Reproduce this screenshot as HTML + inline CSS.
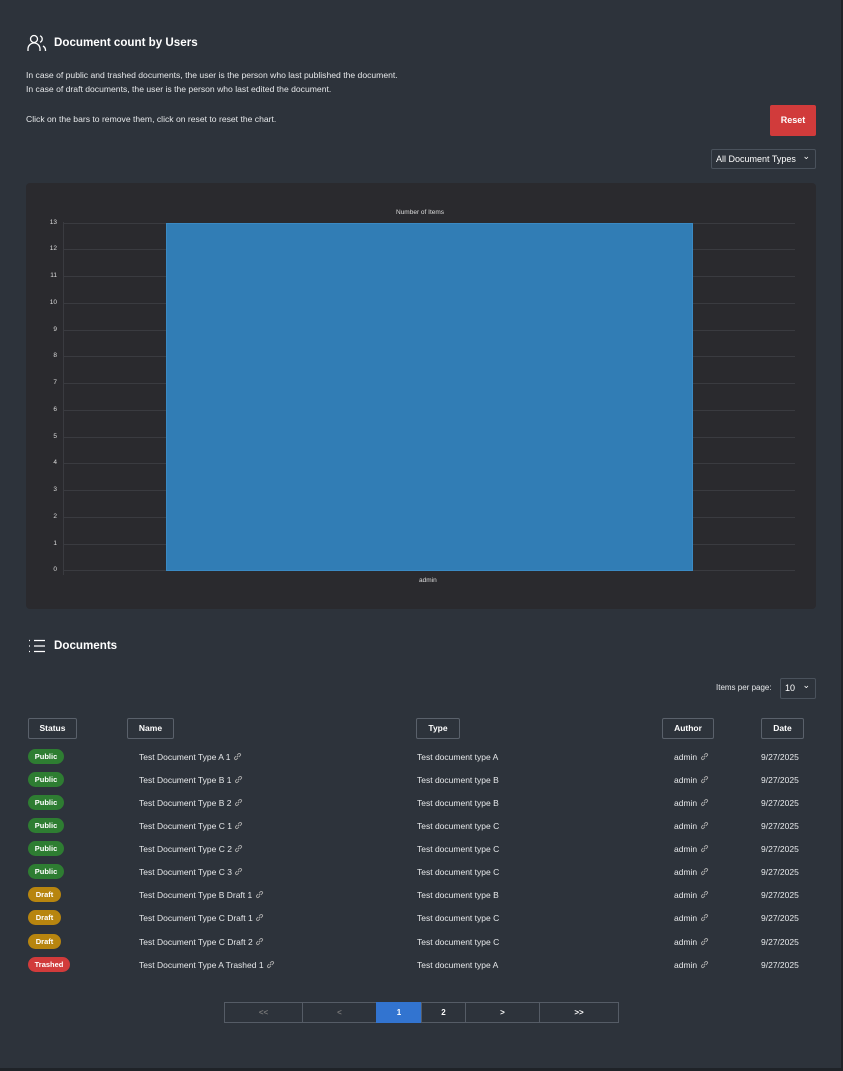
<!DOCTYPE html>
<html><head><meta charset="utf-8"><style>
*{box-sizing:border-box;margin:0;padding:0}
body{width:843px;height:1071px;background:#2d333b;font-family:"Liberation Sans",sans-serif;color:#e6e8ea;position:relative;overflow:hidden}
.a{position:absolute;white-space:nowrap}
.edge{position:absolute;right:0;top:0;width:2px;height:1071px;background:#1f2328}
.bot{position:absolute;left:0;bottom:0;width:843px;height:3px;background:#1f2328}
.h{font-size:11.6px;font-weight:bold;color:#fff}
.p{font-size:8.6px;color:#e6e8ea}
.btn{background:#d13b3b;color:#fff;font-size:9px;font-weight:bold;text-align:center;line-height:31px;border-radius:2px}
.sel{border:1px solid #4a525c;border-radius:2px;font-size:9px;color:#fff;line-height:18px;padding-left:4px}
.sel:after{content:"⌄";position:absolute;right:5px;top:-3px;font-size:9px}
.panel{background:#2a2a2e;border-radius:4px}
.yl{font-size:6.5px;color:#ddd;text-align:right;width:20px}
.g{position:absolute;left:63px;width:732px;height:1px;background:#3a3b40}
.th{border:1px solid #5a616b;border-radius:2px;font-size:8.5px;font-weight:bold;text-align:center;line-height:19px;height:21px;color:#fff}
.b{font-size:7.5px;font-weight:bold;color:#fff;border-radius:8px;height:15px;line-height:15px;text-align:center}
.pub{background:#2e7d32;width:36px}.dr{background:#b7850f;width:33px}.tr{background:#d13b3b;width:42px}
.t{font-size:8.5px;color:#e6e8ea;line-height:12px;height:12px}
.lk{display:inline-block;vertical-align:-1px;width:9px;height:9px}
.pg{position:absolute;top:1002px;height:21px;border:1px solid #555c66;font-size:8px;font-weight:bold;text-align:center;line-height:19px;color:#fff}
</style></head><body>
<div class="edge"></div><div class="bot"></div>
<svg class="a" style="left:27px;top:34px" width="20" height="18" viewBox="0 0 20 18" fill="none" stroke="#fff" stroke-width="1.3"><circle cx="7" cy="5" r="3.5"/><path d="M1 17v-2a5 5 0 0 1 12 0v2"/><path d="M13 1.8a3.5 3.5 0 0 1 0 6.5M16 12a5 5 0 0 1 2.5 4.5v.5"/></svg>
<div class="a h" style="left:54px;top:36px">Document count by Users</div>
<div class="a p" style="left:26px;top:70px">In case of public and trashed documents, the user is the person who last published the document.</div>
<div class="a p" style="left:26px;top:84px">In case of draft documents, the user is the person who last edited the document.</div>
<div class="a p" style="left:26px;top:114px">Click on the bars to remove them, click on reset to reset the chart.</div>
<div class="a btn" style="left:770px;top:105px;width:46px;height:31px">Reset</div>
<div class="a sel" style="left:711px;top:149px;width:105px;height:20px">All Document Types</div>
<div class="a panel" style="left:26px;top:183px;width:790px;height:426px"></div>
<div class="a" style="left:396px;top:209px;font-size:6.5px;color:#ddd">Number of Items</div>
<div class="a" style="left:63px;top:222px;width:1px;height:353px;background:#3a3b40"></div>
<div class="g" style="top:223px"></div><div class="g" style="top:249px"></div><div class="g" style="top:276px"></div><div class="g" style="top:303px"></div><div class="g" style="top:330px"></div><div class="g" style="top:356px"></div><div class="g" style="top:383px"></div><div class="g" style="top:410px"></div><div class="g" style="top:437px"></div><div class="g" style="top:463px"></div><div class="g" style="top:490px"></div><div class="g" style="top:517px"></div><div class="g" style="top:544px"></div><div class="g" style="top:570px"></div>
<div class="a yl" style="left:37px;top:219px">13</div><div class="a yl" style="left:37px;top:245px">12</div><div class="a yl" style="left:37px;top:272px">11</div><div class="a yl" style="left:37px;top:299px">10</div><div class="a yl" style="left:37px;top:326px">9</div><div class="a yl" style="left:37px;top:352px">8</div><div class="a yl" style="left:37px;top:379px">7</div><div class="a yl" style="left:37px;top:406px">6</div><div class="a yl" style="left:37px;top:433px">5</div><div class="a yl" style="left:37px;top:459px">4</div><div class="a yl" style="left:37px;top:486px">3</div><div class="a yl" style="left:37px;top:513px">2</div><div class="a yl" style="left:37px;top:540px">1</div><div class="a yl" style="left:37px;top:566px">0</div>
<div class="a" style="left:166px;top:223px;width:527px;height:348px;background:#317db5;border:1px solid #3a8ac4"></div>
<div class="a" style="left:419px;top:577px;font-size:6.5px;color:#ddd">admin</div>
<svg class="a" style="left:28px;top:639px" width="18" height="14" viewBox="0 0 18 14" stroke="#fff" stroke-width="1.3"><path d="M6 1.5h11M6 7h11M6 12.5h11" /><path d="M1 1.5h1M1 7h1M1 12.5h1"/></svg>
<div class="a h" style="left:54px;top:639px">Documents</div>
<div class="a t" style="left:716px;top:682px;font-size:8px">Items per page:</div>
<div class="a sel" style="left:780px;top:678px;width:36px;height:21px;line-height:19px">10</div>
<div class="a th" style="left:28px;top:718px;width:49px">Status</div>
<div class="a th" style="left:127px;top:718px;width:47px">Name</div>
<div class="a th" style="left:416px;top:718px;width:44px">Type</div>
<div class="a th" style="left:662px;top:718px;width:52px">Author</div>
<div class="a th" style="left:761px;top:718px;width:43px">Date</div>
<div id="rows"></div>
<script>
var L='<svg class="lk" viewBox="0 0 10 10" fill="none" stroke="#aaa" stroke-width="1"><path d="M4.2 5.8l1.6-1.6M3.5 4.5l-1.5 1.5a1.4 1.4 0 0 0 2 2l1.5-1.5M6.5 5.5l1.5-1.5a1.4 1.4 0 0 0-2-2L4.5 3.5"/></svg>';
var r=[["pub","Public","Test Document Type A 1","Test document type A"],["pub","Public","Test Document Type B 1","Test document type B"],["pub","Public","Test Document Type B 2","Test document type B"],["pub","Public","Test Document Type C 1","Test document type C"],["pub","Public","Test Document Type C 2","Test document type C"],["pub","Public","Test Document Type C 3","Test document type C"],["dr","Draft","Test Document Type B Draft 1","Test document type B"],["dr","Draft","Test Document Type C Draft 1","Test document type C"],["dr","Draft","Test Document Type C Draft 2","Test document type C"],["tr","Trashed","Test Document Type A Trashed 1","Test document type A"]];
var ys=[757,780,803,826,849,872,895,918,942,965],h="";
r.forEach(function(x,i){var y=ys[i];h+='<div class="a b '+x[0]+'" style="left:28px;top:'+(y-8)+'px">'+x[1]+'</div><div class="a t" style="left:139px;top:'+(y-6)+'px">'+x[2]+' '+L+'</div><div class="a t" style="left:417px;top:'+(y-6)+'px">'+x[3]+'</div><div class="a t" style="left:674px;top:'+(y-6)+'px">admin '+L+'</div><div class="a t" style="left:761px;top:'+(y-6)+'px">9/27/2025</div>';});
document.getElementById("rows").innerHTML=h;
</script>
<div class="pg" style="left:224px;width:79px;color:#777">&lt;&lt;</div>
<div class="pg" style="left:302px;width:75px;color:#777">&lt;</div>
<div class="pg" style="left:376px;width:46px;background:#3274d0;border-color:#3274d0">1</div>
<div class="pg" style="left:421px;width:45px">2</div>
<div class="pg" style="left:465px;width:75px">&gt;</div>
<div class="pg" style="left:539px;width:80px">&gt;&gt;</div>
</body></html>
